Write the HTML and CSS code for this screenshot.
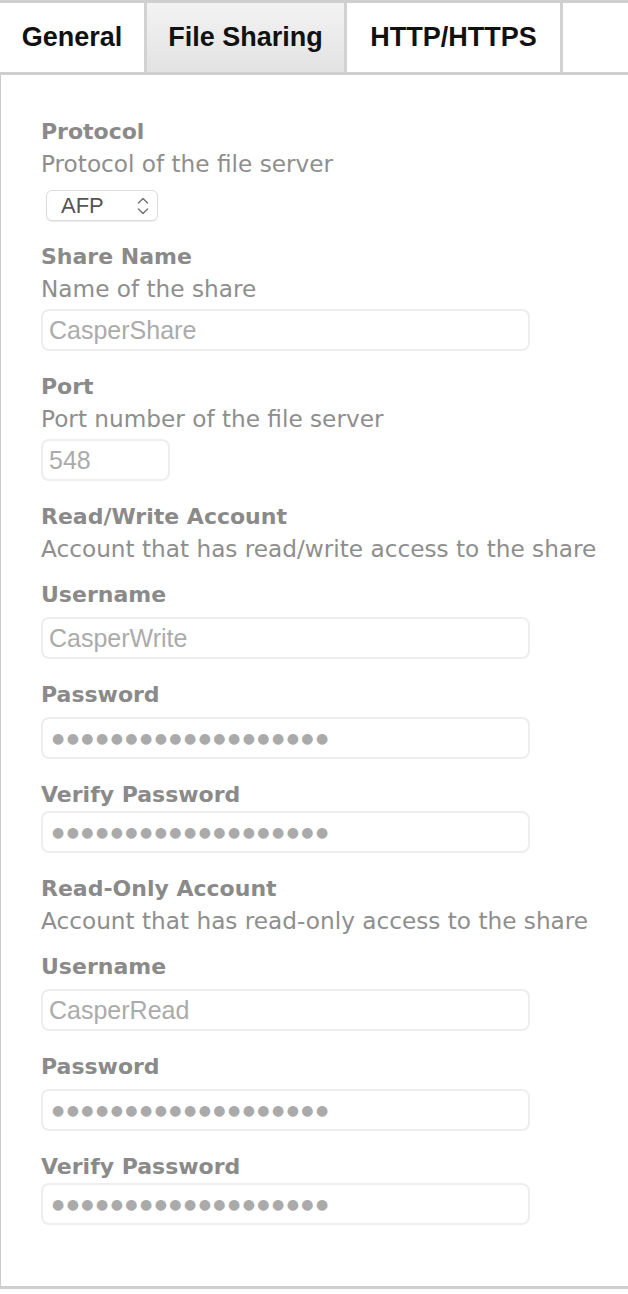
FILE: index.html
```html
<!DOCTYPE html>
<html lang="en">
<head>
<meta charset="utf-8">
<title>File Sharing</title>
<link rel="stylesheet" href="styles.css">
</head>
<body>
<nav class="tabs">
  <div class="tab tab-general">General</div>
  <div class="tab tab-active">File Sharing</div>
  <div class="tab tab-http">HTTP/HTTPS</div>
</nav>
<main class="panel">
  <section class="group">
    <div class="label">Protocol</div>
    <div class="desc">Protocol of the file server</div>
    <div class="select">
      <span class="select-value">AFP</span>
      <svg class="select-arrows" width="14" height="22" viewBox="0 0 14 22" aria-hidden="true">
        <path d="M2.5 8 L7 3.5 L11.5 8" fill="none" stroke="#777" stroke-width="1.5" stroke-linecap="round" stroke-linejoin="round"/>
        <path d="M2.5 14 L7 18.5 L11.5 14" fill="none" stroke="#777" stroke-width="1.5" stroke-linecap="round" stroke-linejoin="round"/>
      </svg>
    </div>
  </section>
  <section class="group">
    <div class="label">Share Name</div>
    <div class="desc">Name of the share</div>
    <div class="field field-wide"><span class="value">CasperShare</span></div>
  </section>
  <section class="group">
    <div class="label">Port</div>
    <div class="desc">Port number of the file server</div>
    <div class="field field-port"><span class="value">548</span></div>
  </section>
  <section class="group">
    <div class="label">Read/Write Account</div>
    <div class="desc">Account that has read/write access to the share</div>
    <div class="label sub">Username</div>
    <div class="field field-wide"><span class="value">CasperWrite</span></div>
  </section>
  <section class="group">
    <div class="label">Password</div>
    <div class="field field-wide"><span class="dots">●●●●●●●●●●●●●●●●●●●</span></div>
  </section>
  <section class="group">
    <div class="label tight">Verify Password</div>
    <div class="field field-wide"><span class="dots">●●●●●●●●●●●●●●●●●●●</span></div>
  </section>
  <section class="group">
    <div class="label">Read-Only Account</div>
    <div class="desc">Account that has read-only access to the share</div>
    <div class="label sub">Username</div>
    <div class="field field-wide"><span class="value">CasperRead</span></div>
  </section>
  <section class="group">
    <div class="label">Password</div>
    <div class="field field-wide"><span class="dots">●●●●●●●●●●●●●●●●●●●</span></div>
  </section>
  <section class="group">
    <div class="label tight">Verify Password</div>
    <div class="field field-wide"><span class="dots">●●●●●●●●●●●●●●●●●●●</span></div>
  </section>
</main>
</body>
</html>
```
FILE: styles.css
```css
html, body {
  margin: 0;
  padding: 0;
  background: #ffffff;
}

body {
  font-family: "DejaVu Sans", sans-serif;
}

.tabs {
  display: flex;
  height: 69px;
  border-top: 3px solid #cfcfcf;
  border-bottom: 3px solid #cfcfcf;
}

.tab {
  display: flex;
  align-items: center;
  justify-content: center;
  flex-shrink: 0;
  box-sizing: border-box;
  white-space: nowrap;
  border-right: 3px solid #d2d2d2;
  font-family: "Liberation Sans", Arial, sans-serif;
  font-weight: bold;
  font-size: 27px;
  color: #111111;
}

.tab-general {
  width: 147px;
}

.tab-active {
  background: linear-gradient(#f3f3f3, #e2e2e2);
  width: 200px;
}

.tab-http {
  width: 216px;
}

.panel {
  border-left: 1px solid #cccccc;
  border-bottom: 3px solid #cfcfcf;
  padding: 41px 0 61px 40px;
}

.group + .group {
  margin-top: 20px;
}

.label {
  font-family: "DejaVu Sans", sans-serif;
  font-weight: bold;
  font-size: 22px;
  line-height: 32px;
  color: #8a8a8a;
}

.desc {
  font-size: 23.2px;
  line-height: 32px;
  color: #8e8e8e;
}

.label.sub {
  margin-top: 14px;
}

.label + .field {
  margin-top: 6px;
}

.label.tight + .field {
  margin-top: 0;
}

.desc + .field {
  margin-top: 4px;
}

.select {
  margin: 10px 0 2px 5px;
  width: 112px;
  height: 31px;
  box-sizing: border-box;
  border: 1px solid #dcdcdc;
  border-radius: 6px;
  box-shadow: 0 1px 1px rgba(0, 0, 0, 0.08);
  display: flex;
  align-items: center;
  justify-content: space-between;
  padding: 0 7px 0 14px;
  background: #ffffff;
}

.select-value {
  font-family: "Liberation Sans", Arial, sans-serif;
  font-size: 22px;
  color: #555555;
}

.select-arrows {
  display: block;
}

.field {
  box-sizing: border-box;
  height: 42px;
  border: 2px solid #eeeeee;
  border-radius: 8px;
  display: flex;
  align-items: center;
  padding-left: 6px;
  background: #ffffff;
}

.field-wide {
  width: 489px;
}

.field-port {
  width: 129px;
}

.value {
  font-family: "Liberation Sans", Arial, sans-serif;
  font-size: 25px;
  color: #ababab;
}

.dots {
  font-family: "DejaVu Sans", sans-serif;
  font-size: 14px;
  letter-spacing: 2.45px;
  color: #aaaaaa;
  padding-left: 3px;
}
```
